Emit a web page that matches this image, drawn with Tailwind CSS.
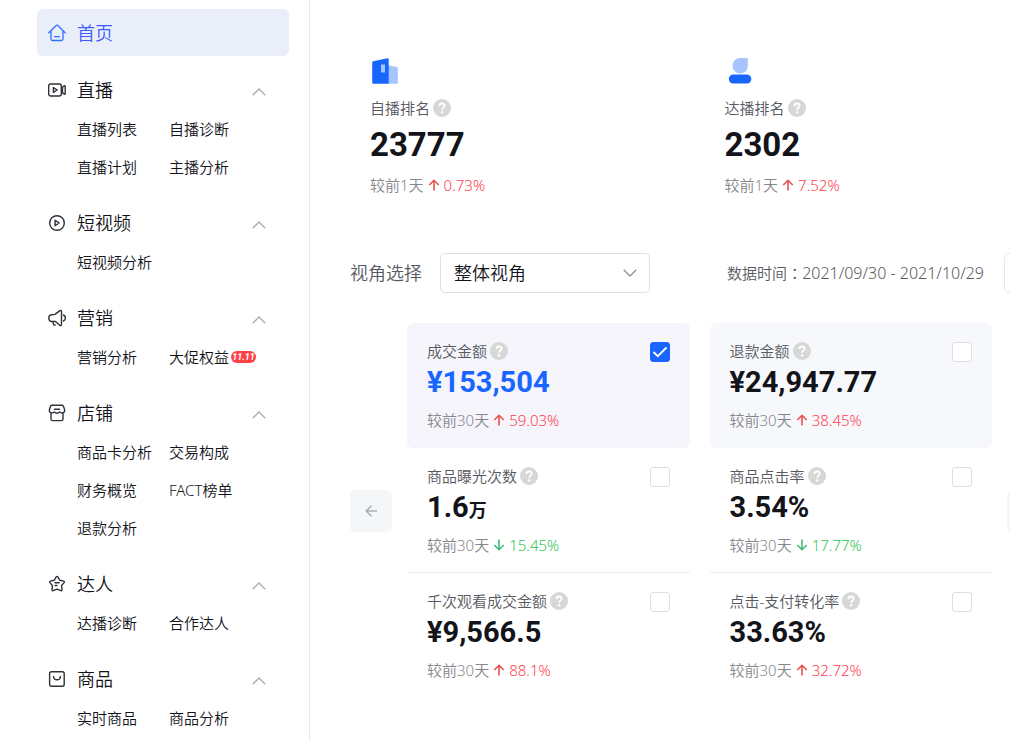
<!DOCTYPE html>
<html lang="zh-CN">
<head>
<meta charset="utf-8">
<meta name="viewport" content="width=device-width, initial-scale=1">
<title>首页</title>
<script src="https://cdn.jsdelivr.net/npm/@tailwindcss/browser@4"></script>
</head>
<body class="flex h-screen overflow-hidden bg-white font-['Noto_Sans','Noto_Sans_CJK_SC',sans-serif] text-[15px] font-[350] text-[#12141a]">

<!-- Shared icons -->
<svg class="hidden" aria-hidden="true">
  <symbol id="up" viewBox="0 0 14 8"><path d="M.7 7.3 7 1l6.3 6.3" fill="none" stroke="currentColor" stroke-width="1.3"/></symbol>
  <symbol id="help" viewBox="0 0 18 18"><circle cx="9" cy="9" r="9" fill="#d7d7d7"/><path d="M6.4 7.1C6.5 5.400 7.500 4.500 9 4.500s2.600.9 2.600 2.300c0 1.900-2.500 1.900-2.500 3.900" fill="none" stroke="#fff" stroke-width="1.8"/><circle cx="9.100" cy="13.200" r="1.200" fill="#fff"/></symbol>
  <symbol id="rise" viewBox="0 0 12 12"><path d="M6 11.500V1.500M1.300 6 6 1.300 10.700 6" fill="none" stroke="currentColor" stroke-width="1.600"/></symbol>
  <symbol id="fall" viewBox="0 0 12 12"><path d="M6 .500v10M1.300 6 6 10.700 10.700 6" fill="none" stroke="currentColor" stroke-width="1.600"/></symbol>
</svg>

<aside class="w-[310px] shrink-0 overflow-hidden border-r border-[#e8e8ea] pt-[9px] pr-5 pl-[37px]">
  <nav>
    <a href="#" class="mb-[14px] flex h-[47px] items-center gap-[11px] rounded-md bg-[#eaeef9] pl-[11px] text-lg text-[#3d5afe]">
      <svg class="size-[18px]" viewBox="0 0 18 18" fill="none" stroke="#3370ff" stroke-width="1.300" stroke-linecap="round" stroke-linejoin="round"><path d="M.8 8.700 8.200 1.500q.8-.7 1.600 0l7.400 7.200M3 7v8q0 1.500 1.500 1.500h9Q15 16.500 15 15V7M6.500 12.700h5"/></svg>
      首页
    </a>

    <section class="pb-[17px]">
      <button type="button" class="flex h-10 w-full items-center gap-[11px] pr-[23px] pl-[11px] text-lg">
        <svg class="size-[18px]" viewBox="0 0 18 18" fill="none" stroke="#303238" stroke-width="1.400" stroke-linejoin="round"><rect x=".7" y="3" width="12.600" height="12" rx="2"/><path d="M5.400 6.600v4.800L9.200 9zM14.500 6.200l1.700-1.300q1-.4 1 .7v6.800q0 1.100-1 .7l-1.700-1.300z"/></svg>
        直播
        <svg class="mt-[3px] ml-auto h-2 w-[14px] text-[#a8abb0]"><use href="#up"/></svg>
      </button>
      <div class="grid grid-cols-[92px_auto] pl-10 leading-[38px]">
        <a href="#">直播列表</a><a href="#">自播诊断</a>
        <a href="#">直播计划</a><a href="#">主播分析</a>
      </div>
    </section>

    <section class="pb-[17px]">
      <button type="button" class="flex h-10 w-full items-center gap-[11px] pr-[23px] pl-[11px] text-lg">
        <svg class="size-[18px]" viewBox="0 0 18 18" fill="none" stroke="#303238" stroke-width="1.400" stroke-linejoin="round"><circle cx="9" cy="9" r="7.300"/><path d="M7.100 6.300v5.400L11.200 9z"/></svg>
        短视频
        <svg class="mt-[3px] ml-auto h-2 w-[14px] text-[#a8abb0]"><use href="#up"/></svg>
      </button>
      <div class="grid grid-cols-[92px_auto] pl-10 leading-[38px]">
        <a href="#">短视频分析</a>
      </div>
    </section>

    <section class="pb-[17px]">
      <button type="button" class="flex h-10 w-full items-center gap-[11px] pr-[23px] pl-[11px] text-lg">
        <svg class="size-[18px]" viewBox="0 0 18 18" fill="none" stroke="#303238" stroke-width="1.400" stroke-linecap="round" stroke-linejoin="round"><path d="M3.500 5.700 7 5.400l4.500-3.500q2-1.200 2 .800v12.600q0 2-2 .8L7.500 12.500H3.200Q.8 12 .8 9q0-2.800 2.700-3.300zM4.800 12.600l.8 3.100 1.500.3M15.400 6q2 .8 2 3t-2 3"/></svg>
        营销
        <svg class="mt-[3px] ml-auto h-2 w-[14px] text-[#a8abb0]"><use href="#up"/></svg>
      </button>
      <div class="grid grid-cols-[92px_auto] pl-10 leading-[38px]">
        <a href="#">营销分析</a>
        <a href="#" class="flex items-center gap-0.5 whitespace-nowrap">大促权益<span class="h-3 w-[25px] rounded-full bg-[#ff4045] text-center font-['Roboto',sans-serif] text-[9px] leading-3 font-bold text-white italic">11.11</span></a>
      </div>
    </section>

    <section class="pb-[17px]">
      <button type="button" class="flex h-10 w-full items-center gap-[11px] pr-[23px] pl-[11px] text-lg">
        <svg class="size-[18px]" viewBox="0 0 18 18" fill="none" stroke="#303238" stroke-width="1.400" stroke-linecap="round" stroke-linejoin="round"><path d="M4 1.200h10q1 0 1.400 1l1.200 3.300q.5 3.300-2.500 3.500-1.600 0-2.500-1.100Q10.600 9.200 9 9.200T6.400 7.900Q5.500 9 3.900 9 .9 8.800 1.400 5.500l1.200-3.300q.4-1 1.400-1zM3 9.300v5.700q0 1.600 1.600 1.600h8.800q1.600 0 1.600-1.600V9.300M6.500 5.300h5"/></svg>
        店铺
        <svg class="mt-[3px] ml-auto h-2 w-[14px] text-[#a8abb0]"><use href="#up"/></svg>
      </button>
      <div class="grid grid-cols-[92px_auto] pl-10 leading-[38px]">
        <a href="#">商品卡分析</a><a href="#">交易构成</a>
        <a href="#">财务概览</a><a href="#">FACT榜单</a>
        <a href="#">退款分析</a>
      </div>
    </section>

    <section class="pb-[17px]">
      <button type="button" class="flex h-10 w-full items-center gap-[11px] pr-[23px] pl-[11px] text-lg">
        <svg class="size-[18px]" viewBox="0 0 18 18" fill="none" stroke="#303238" stroke-width="1.400" stroke-linecap="round" stroke-linejoin="round"><path d="M8.200 1.900q.8-1.100 1.600 0l1.900 3.300 3.900.9q1.300.4.500 1.500l-2.500 2.900.4 4.200q0 1.300-1.200.9L9 14.100l-3.800 1.500q-1.200.4-1.200-.9l.4-4.200-2.500-2.900q-.8-1.100.5-1.500l3.900-.9zM7 7.800h4.200M7 10.500h2"/></svg>
        达人
        <svg class="mt-[3px] ml-auto h-2 w-[14px] text-[#a8abb0]"><use href="#up"/></svg>
      </button>
      <div class="grid grid-cols-[92px_auto] pl-10 leading-[38px]">
        <a href="#">达播诊断</a><a href="#">合作达人</a>
      </div>
    </section>

    <section class="pb-[17px]">
      <button type="button" class="flex h-10 w-full items-center gap-[11px] pr-[23px] pl-[11px] text-lg">
        <svg class="size-[18px]" viewBox="0 0 18 18" fill="none" stroke="#303238" stroke-width="1.400" stroke-linecap="round"><rect x="1.600" y="1.800" width="14.600" height="14.400" rx="1.800"/><path d="M5.500 6.500q.4 3.300 3.500 3.300t3.500-3.300"/></svg>
        商品
        <svg class="mt-[3px] ml-auto h-2 w-[14px] text-[#a8abb0]"><use href="#up"/></svg>
      </button>
      <div class="grid grid-cols-[92px_auto] pl-10 leading-[38px]">
        <a href="#">实时商品</a><a href="#">商品分析</a>
      </div>
    </section>
  </nav>
</aside>

<main class="min-w-0 flex-1 overflow-hidden pl-10">
  <!-- The content runs past the right edge of the viewport -->
  <div class="-mr-[39px]">
    <div class="grid grid-cols-2 gap-[30px] pt-[58px] pl-5">
      <section>
        <svg class="ml-0.5 size-[26px]" viewBox="0 0 26 26"><path d="M16 7.200 24.800 9q1 .2 1 1.200V25q0 .8-.8.8H16z" fill="#a6c5ff"/><path d="M1.200 3.200 15.500.2q1.200-.2 1.200 1v24.600H1.200Q.2 25.800.2 24.800V4.400q0-1 1-1.200z" fill="#1966ff"/><rect x="9" y="6.500" width="4" height="8" rx=".5" fill="#a6c5ff"/></svg>
        <h2 class="mt-[14px] flex h-5 items-center gap-[3px] text-[#565960]">自播排名 <svg class="size-[18px]"><use href="#help"/></svg></h2>
        <p class="mt-[7px] font-['Roboto',sans-serif] text-[33px] leading-10 font-bold">23777</p>
        <p class="mt-[10px] flex h-5 items-center gap-1 text-[#85878c]">较前1天 <svg class="size-3 text-[#e8514f]"><use href="#rise"/></svg><span class="text-[#ff3b4e]">0.73%</span></p>
      </section>
      <section>
        <svg class="ml-0.5 size-[26px]" viewBox="0 0 26 26"><path d="M13.200 0h6.500q1.200 0 1.200 1.200v6.500A7.700 7.700 0 1 1 13.200 0z" fill="#a6c5ff"/><rect x="1.800" y="16.500" width="22.500" height="9" rx="4.500" fill="#1966ff"/></svg>
        <h2 class="mt-[14px] flex h-5 items-center gap-[3px] text-[#565960]">达播排名 <svg class="size-[18px]"><use href="#help"/></svg></h2>
        <p class="mt-[7px] font-['Roboto',sans-serif] text-[33px] leading-10 font-bold">2302</p>
        <p class="mt-[10px] flex h-5 items-center gap-1 text-[#85878c]">较前1天 <svg class="size-3 text-[#e8514f]"><use href="#rise"/></svg><span class="text-[#ff3b4e]">7.52%</span></p>
      </section>
    </div>

    <div class="mt-[58px] flex h-10 items-center text-[#565960]">
      <label for="view" class="mr-[18px] text-lg">视角选择</label>
      <div class="relative">
        <select id="view" class="h-10 w-[210px] appearance-none rounded-[5px] border border-[#dcdee2] bg-white pl-[13px] text-lg text-[#12141a]"><option>整体视角</option></select>
        <svg class="pointer-events-none absolute top-4 right-[13px] h-2 w-[14px] rotate-180 text-[#8f9299]"><use href="#up"/></svg>
      </div>
      <p class="mr-5 ml-auto whitespace-nowrap">数据时间<span lang="zh-TW" class="font-['Noto_Sans_CJK_TC',sans-serif] leading-none">：</span><span class="text-base">2021/09/30 - 2021/10/29</span></p>
      <button type="button" aria-label="选择日期" class="h-10 w-[45px] rounded-[5px] border border-[#e8e9ec]"></button>
    </div>

    <div class="mt-[30px] flex items-center gap-[15px]">
      <button type="button" aria-label="上一页" class="flex size-[42px] shrink-0 items-center justify-center rounded-[5px] bg-[#f5f6f8] text-[#abadb2]">
        <svg class="size-3" viewBox="0 0 12 12"><path d="M12 6H1M6.500.7 1.200 6l5.300 5.300" fill="none" stroke="currentColor" stroke-width="1.500"/></svg>
      </button>

      <div class="grid flex-1 grid-cols-2 gap-x-5">
        <article class="relative h-[125px] rounded-md bg-[#f5f5fb] px-5 pt-[18px]">
          <label for="m1" class="flex h-5 items-center gap-[3px] text-[#565960]">成交金额 <svg class="size-[18px]"><use href="#help"/></svg></label>
          <p class="mt-[5px] font-['Roboto','Noto_Sans_CJK_SC',sans-serif] text-[29px] leading-8 font-bold text-[#1966ff]">¥153,504</p>
          <p class="mt-3 flex h-5 items-center gap-1 text-[#85878c]">较前30天 <svg class="size-3 text-[#e8514f]"><use href="#rise"/></svg><span class="text-[#ff3b4e]">59.03%</span></p>
          <input id="m1" type="checkbox" checked class="absolute top-[19px] right-5 size-5 appearance-none rounded-[3px] border border-[#dcdee2] bg-white checked:border-[#1966ff] checked:bg-[#1966ff]">
          <svg class="pointer-events-none absolute top-[19px] right-5 size-5" viewBox="0 0 20 20"><path d="m3.500 10 4.300 4.200 8.700-8.700" fill="none" stroke="#fff" stroke-width="1.800"/></svg>
        </article>

        <article class="relative h-[125px] rounded-md bg-[#f7f8fc] px-5 pt-[18px]">
          <label for="m2" class="flex h-5 items-center gap-[3px] text-[#565960]">退款金额 <svg class="size-[18px]"><use href="#help"/></svg></label>
          <p class="mt-[5px] font-['Roboto','Noto_Sans_CJK_SC',sans-serif] text-[29px] leading-8 font-bold">¥24,947.77</p>
          <p class="mt-3 flex h-5 items-center gap-1 text-[#85878c]">较前30天 <svg class="size-3 text-[#e8514f]"><use href="#rise"/></svg><span class="text-[#ff3b4e]">38.45%</span></p>
          <input id="m2" type="checkbox" class="absolute top-[19px] right-5 size-5 appearance-none rounded-[3px] border border-[#dcdee2] bg-white checked:border-[#1966ff] checked:bg-[#1966ff]">
        </article>

        <article class="relative h-[125px] border-b border-[#ebecef] px-5 pt-[18px]">
          <label for="m3" class="flex h-5 items-center gap-[3px] text-[#565960]">商品曝光次数 <svg class="size-[18px]"><use href="#help"/></svg></label>
          <p class="mt-[5px] font-['Roboto','Noto_Sans_CJK_SC',sans-serif] text-[29px] leading-8 font-bold">1.6<span class="text-lg leading-none">万</span></p>
          <p class="mt-3 flex h-5 items-center gap-1 text-[#85878c]">较前30天 <svg class="size-3 text-[#3dba7e]"><use href="#fall"/></svg><span class="text-[#30c553]">15.45%</span></p>
          <input id="m3" type="checkbox" class="absolute top-[19px] right-5 size-5 appearance-none rounded-[3px] border border-[#dcdee2] bg-white checked:border-[#1966ff] checked:bg-[#1966ff]">
        </article>

        <article class="relative h-[125px] border-b border-[#ebecef] px-5 pt-[18px]">
          <label for="m4" class="flex h-5 items-center gap-[3px] text-[#565960]">商品点击率 <svg class="size-[18px]"><use href="#help"/></svg></label>
          <p class="mt-[5px] font-['Roboto','Noto_Sans_CJK_SC',sans-serif] text-[29px] leading-8 font-bold">3.54%</p>
          <p class="mt-3 flex h-5 items-center gap-1 text-[#85878c]">较前30天 <svg class="size-3 text-[#3dba7e]"><use href="#fall"/></svg><span class="text-[#30c553]">17.77%</span></p>
          <input id="m4" type="checkbox" class="absolute top-[19px] right-5 size-5 appearance-none rounded-[3px] border border-[#dcdee2] bg-white checked:border-[#1966ff] checked:bg-[#1966ff]">
        </article>

        <article class="relative h-[125px] px-5 pt-[18px]">
          <label for="m5" class="flex h-5 items-center gap-[3px] text-[#565960]">千次观看成交金额 <svg class="size-[18px]"><use href="#help"/></svg></label>
          <p class="mt-[5px] font-['Roboto','Noto_Sans_CJK_SC',sans-serif] text-[29px] leading-8 font-bold">¥9,566.5</p>
          <p class="mt-3 flex h-5 items-center gap-1 text-[#85878c]">较前30天 <svg class="size-3 text-[#e8514f]"><use href="#rise"/></svg><span class="text-[#ff3b4e]">88.1%</span></p>
          <input id="m5" type="checkbox" class="absolute top-[19px] right-5 size-5 appearance-none rounded-[3px] border border-[#dcdee2] bg-white checked:border-[#1966ff] checked:bg-[#1966ff]">
        </article>

        <article class="relative h-[125px] px-5 pt-[18px]">
          <label for="m6" class="flex h-5 items-center gap-[3px] text-[#565960]">点击-支付转化率 <svg class="size-[18px]"><use href="#help"/></svg></label>
          <p class="mt-[5px] font-['Roboto','Noto_Sans_CJK_SC',sans-serif] text-[29px] leading-8 font-bold">33.63%</p>
          <p class="mt-3 flex h-5 items-center gap-1 text-[#85878c]">较前30天 <svg class="size-3 text-[#e8514f]"><use href="#rise"/></svg><span class="text-[#ff3b4e]">32.72%</span></p>
          <input id="m6" type="checkbox" class="absolute top-[19px] right-5 size-5 appearance-none rounded-[3px] border border-[#dcdee2] bg-white checked:border-[#1966ff] checked:bg-[#1966ff]">
        </article>
      </div>

      <button type="button" aria-label="下一页" class="size-[42px] shrink-0 rounded-[5px] bg-[#f5f6f8]"></button>
    </div>
  </div>
</main>
</body>
</html>
